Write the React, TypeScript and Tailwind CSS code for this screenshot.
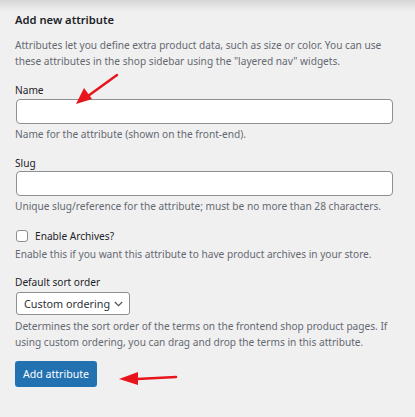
import React from "react";

const font = { fontFamily: '"Noto Sans", "Open Sans", sans-serif' };

export default function App() {
  return (
    <div
      className="relative w-[415px] h-[417px] overflow-hidden bg-[#f0f0f1] text-[#1d2327] text-[10.15px] leading-[16px]"
      style={font}
    >
      <div className="absolute left-0 top-0 w-full h-[12px] bg-gradient-to-b from-[#d6d6d7] to-[#f0f0f1]" />
      <div className="relative flex flex-col pl-[15px] pr-[10px] pt-[12px]">
        <h2 className="text-[11.2px] leading-[16px] font-semibold text-[#1d2327]">Add new attribute</h2>
        <p className="mt-[9px] text-[#646970] leading-[16px]">
          Attributes let you define extra product data, such as size or color. You can use these attributes in the shop
          sidebar using the "layered nav" widgets.
        </p>
        <label className="mt-[13px] h-[16px]">Name</label>
        <input className="mt-[1px] ml-[1px] w-[377px] h-[25px] bg-white border border-[#8c8f94] rounded-[4px]" />
        <p className="mt-[2px] text-[#646970]">Name for the attribute (shown on the front-end).</p>
        <label className="mt-[13px] h-[16px]">Slug</label>
        <input className="mt-0 ml-[1px] w-[377px] h-[25px] bg-white border border-[#8c8f94] rounded-[4px]" />
        <p className="mt-[2px] text-[#646970]">Unique slug/reference for the attribute; must be no more than 28 characters.</p>
        <label className="mt-[14px] h-[16px] flex items-center gap-[7px]">
          <span className="ml-[1px] w-[12px] h-[12px] bg-white border border-[#8c8f94] rounded-[3px]" />
          <span>Enable Archives?</span>
        </label>
        <p className="mt-[2px] text-[#646970]">Enable this if you want this attribute to have product archives in your store.</p>
        <label className="mt-[12px] h-[16px]">Default sort order</label>
        <div className="mt-[2px] ml-[1px] w-[114px] h-[23px] bg-white border border-[#8c8f94] rounded-[3px] flex items-center gap-[4px] pl-[7px] pr-[7px] justify-between text-[10.8px] leading-[14px] whitespace-nowrap text-[#2c3338]">
          <span>Custom ordering</span>
          <svg width="9" height="6" viewBox="0 0 9 6" className="shrink-0">
            <path d="M0.8 1 L4.5 4.7 L8.2 1" fill="none" stroke="#50575e" strokeWidth="1.2" />
          </svg>
        </div>
        <p className="mt-[3px] text-[#646970]">
          Determines the sort order of the terms on the frontend shop product pages. If using custom ordering, you can
          drag and drop the terms in this attribute.
        </p>
        <div className="mt-[11px]">
          <button className="h-[26px] w-[82px] bg-[#2271b1] text-white rounded-[3px] text-[10.6px] leading-[16px]">
            Add attribute
          </button>
        </div>
      </div>
      <svg className="absolute left-0 top-0" width="415" height="417" viewBox="0 0 415 417">
        <path d="M117 75 L88 96" stroke="#e8141c" strokeWidth="2.5" strokeLinecap="round" />
        <path d="M76 104 L84 88 L92 99 Z" fill="#e8141c" />
        <path d="M176 377 L137 379" stroke="#e8141c" strokeWidth="2.5" strokeLinecap="round" />
        <path d="M119 379 L138 372 L138 385 Z" fill="#e8141c" />
      </svg>
    </div>
  );
}
